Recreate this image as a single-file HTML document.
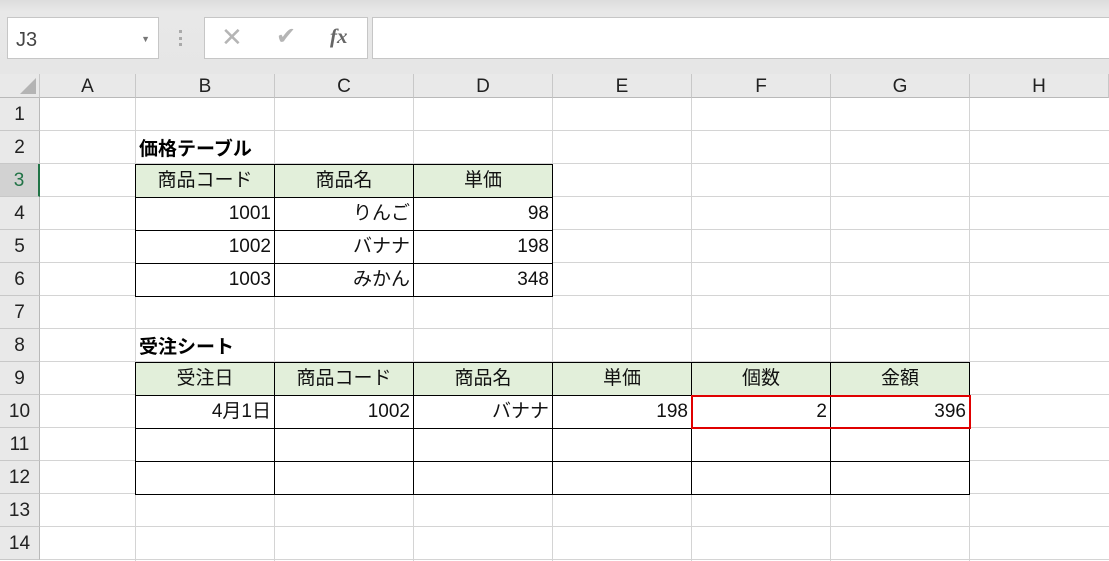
<!DOCTYPE html>
<html><head><meta charset="utf-8"><style>
*{margin:0;padding:0;box-sizing:border-box}
body{width:1109px;height:561px;background:#fff;position:relative;overflow:hidden;font-family:"Liberation Sans","Noto Sans CJK JP",sans-serif}
.a{position:absolute}
.top{left:0;top:0;width:1109px;height:74px;background:linear-gradient(#dcdcdc 0,#e8e8e8 12px,#e6e6e6 100%)}
.box{background:#fff;border:1px solid #c6c6c6}
.vl{position:absolute;top:98px;width:1px;height:463px;background:#d4d4d4}
.hl{position:absolute;left:40px;width:1069px;height:1px;background:#d4d4d4}
.ch{position:absolute;top:74px;height:24px;background:#e9e9e9;border-right:1px solid #c8c8c8;border-bottom:1px solid #b9b9b9;text-align:center;font-size:19px;line-height:25px;color:#222}
.rh{position:absolute;left:0;width:40px;height:33px;background:#e9e9e9;border-bottom:1px solid #c8c8c8;border-right:1px solid #b9b9b9;text-align:center;font-size:19px;line-height:33px;color:#222}
.c{position:absolute;height:34px;width:140px;border:1px solid #000;font-family:"Liberation Sans","Noto Sans CJK JP",sans-serif;font-size:19px;line-height:32px;padding:0 3px;color:#111;background:#fff}
.g{background:#e2efda;text-align:center}
.r{text-align:right}
.t{position:absolute;font-family:"Noto Sans CJK JP",sans-serif;font-size:19px;font-weight:bold;line-height:33px;color:#000}
</style></head><body>
<div class="a top"></div>
<div class="a box" style="left:7px;top:17px;width:152px;height:42px;font-size:20px;line-height:44px;padding-left:8px;color:#444">J3<span style="position:absolute;right:8px;top:0;font-size:9px;line-height:42px;color:#777">▼</span></div>
<div class="a" style="left:179px;top:30px;width:3px;height:16px;border-left:3px dotted #aaa"></div>
<div class="a box" style="left:204px;top:17px;width:164px;height:42px"></div>
<div class="a" style="left:221px;top:22px;font-size:26px;color:#b5b5b5">✕</div>
<div class="a" style="left:276px;top:22px;font-size:24px;color:#b5b5b5">✔</div>
<div class="a" style="left:330px;top:24px;font-size:21px;font-style:italic;font-weight:bold;font-family:'Liberation Serif',serif;color:#666">fx</div>
<div class="a box" style="left:372px;top:17px;width:740px;height:42px"></div>

<div class="a" style="left:0;top:74px;width:40px;height:24px;background:#e9e9e9;border-right:1px solid #c8c8c8;border-bottom:1px solid #b9b9b9"></div>
<div class="a" style="left:20px;top:78px;width:0;height:0;border-left:16px solid transparent;border-bottom:16px solid #b4b4b4"></div>
<div class="ch" style="left:40px;width:96px">A</div>
<div class="ch" style="left:136px;width:139px">B</div>
<div class="ch" style="left:275px;width:139px">C</div>
<div class="ch" style="left:414px;width:139px">D</div>
<div class="ch" style="left:553px;width:139px">E</div>
<div class="ch" style="left:692px;width:139px">F</div>
<div class="ch" style="left:831px;width:139px">G</div>
<div class="ch" style="left:970px;width:139px">H</div>

<div class="vl" style="left:135px"></div><div class="vl" style="left:274px"></div><div class="vl" style="left:413px"></div><div class="vl" style="left:552px"></div><div class="vl" style="left:691px"></div><div class="vl" style="left:830px"></div><div class="vl" style="left:969px"></div>
<div class="hl" style="top:130px"></div><div class="hl" style="top:163px"></div><div class="hl" style="top:196px"></div><div class="hl" style="top:229px"></div><div class="hl" style="top:262px"></div><div class="hl" style="top:295px"></div><div class="hl" style="top:328px"></div><div class="hl" style="top:361px"></div><div class="hl" style="top:394px"></div><div class="hl" style="top:427px"></div><div class="hl" style="top:460px"></div><div class="hl" style="top:493px"></div><div class="hl" style="top:526px"></div><div class="hl" style="top:559px"></div>

<div class="rh" style="top:98px">1</div>
<div class="rh" style="top:131px">2</div>
<div class="rh" style="top:164px;background:#d2d2d2;color:#217346;border-right:2px solid #217346">3</div>
<div class="rh" style="top:197px">4</div>
<div class="rh" style="top:230px">5</div>
<div class="rh" style="top:263px">6</div>
<div class="rh" style="top:296px">7</div>
<div class="rh" style="top:329px">8</div>
<div class="rh" style="top:362px">9</div>
<div class="rh" style="top:395px">10</div>
<div class="rh" style="top:428px">11</div>
<div class="rh" style="top:461px">12</div>
<div class="rh" style="top:494px">13</div>
<div class="rh" style="top:527px">14</div>

<div class="t" style="left:139px;top:131px">価格テーブル</div>
<div class="c g" style="left:135px;top:164px">商品コード</div>
<div class="c g" style="left:274px;top:164px">商品名</div>
<div class="c g" style="left:413px;top:164px">単価</div>
<div class="c r" style="left:135px;top:197px">1001</div>
<div class="c r" style="left:274px;top:197px">りんご</div>
<div class="c r" style="left:413px;top:197px">98</div>
<div class="c r" style="left:135px;top:230px">1002</div>
<div class="c r" style="left:274px;top:230px">バナナ</div>
<div class="c r" style="left:413px;top:230px">198</div>
<div class="c r" style="left:135px;top:263px">1003</div>
<div class="c r" style="left:274px;top:263px">みかん</div>
<div class="c r" style="left:413px;top:263px">348</div>

<div class="t" style="left:139px;top:329px">受注シート</div>
<div class="c g" style="left:135px;top:362px">受注日</div>
<div class="c g" style="left:274px;top:362px">商品コード</div>
<div class="c g" style="left:413px;top:362px">商品名</div>
<div class="c g" style="left:552px;top:362px">単価</div>
<div class="c g" style="left:691px;top:362px">個数</div>
<div class="c g" style="left:830px;top:362px">金額</div>
<div class="c r" style="left:135px;top:395px">4月1日</div>
<div class="c r" style="left:274px;top:395px">1002</div>
<div class="c r" style="left:413px;top:395px">バナナ</div>
<div class="c r" style="left:552px;top:395px">198</div>
<div class="c r" style="left:691px;top:395px">2</div>
<div class="c r" style="left:830px;top:395px">396</div>
<div class="c" style="left:135px;top:428px"></div><div class="c" style="left:274px;top:428px"></div><div class="c" style="left:413px;top:428px"></div><div class="c" style="left:552px;top:428px"></div><div class="c" style="left:691px;top:428px"></div><div class="c" style="left:830px;top:428px"></div>
<div class="c" style="left:135px;top:461px"></div><div class="c" style="left:274px;top:461px"></div><div class="c" style="left:413px;top:461px"></div><div class="c" style="left:552px;top:461px"></div><div class="c" style="left:691px;top:461px"></div><div class="c" style="left:830px;top:461px"></div>
<div class="a" style="left:691px;top:395px;width:280px;height:34px;border:2px solid #e00000"></div>
</body></html>
